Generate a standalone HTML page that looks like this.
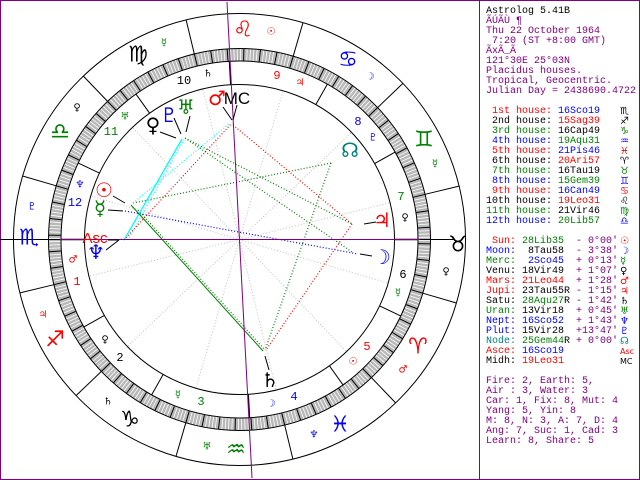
<!DOCTYPE html>
<html><head><meta charset="utf-8"><style>
html,body{margin:0;padding:0;background:#fff;width:640px;height:480px;overflow:hidden}
#w{position:relative;width:640px;height:480px}
svg{position:absolute;left:0;top:0}
#p{position:absolute;left:486px;top:7px;font-family:"Liberation Mono",monospace;font-size:10px;line-height:10px;white-space:pre;color:#800080}
.r{color:#f00}.k{color:#000}.g{color:#008000}.b{color:#00f}.t{color:#008080}.m{color:#800080}
.gl{position:absolute;left:139px;font-family:"DejaVu Sans",sans-serif;font-size:10px}
</style></head><body><div id="w">
<svg id="s" width="640" height="480" viewBox="0 0 640 480" font-family="DejaVu Sans, sans-serif">
<rect x="0.5" y="0.5" width="639" height="479" fill="#fff" stroke="#800080"/>
<line x1="479.5" y1="0" x2="479.5" y2="480" stroke="#800080"/>
<g id="geo"></g>
<circle cx="239.5" cy="239.5" r="226" fill="none" stroke="#000"/>
<circle cx="239.5" cy="239.5" r="191" fill="none" stroke="#000"/>
<circle cx="239.5" cy="239.5" r="178.5" fill="none" stroke="#000"/>
<circle cx="239.5" cy="239.5" r="155" fill="none" stroke="#000"/>
<!-- aspects -->
<g fill="none" stroke-width="1.2" stroke-dasharray="1 2">
<line x1="124" y1="240" x2="232" y2="123" stroke="#f00"/>
<line x1="233" y1="125" x2="352" y2="224" stroke="#f00"/>
<line x1="352" y1="224" x2="266" y2="350" stroke="#f00"/>
<line x1="185" y1="138" x2="352" y2="252" stroke="#008000"/>
<line x1="185" y1="138" x2="352" y2="224" stroke="#008000"/>
<line x1="133" y1="203" x2="331" y2="163" stroke="#008000"/>
<line x1="331" y1="163" x2="265" y2="350" stroke="#008000"/>
<line x1="138" y1="210" x2="265" y2="350" stroke="#008000"/>
<line x1="125" y1="211" x2="358" y2="254" stroke="#00f"/>
<line x1="133" y1="203" x2="230" y2="123" stroke="#0ff"/>
<line x1="128" y1="240" x2="185" y2="138" stroke="#0ff"/>
</g>
<line x1="124" y1="240" x2="182" y2="139" stroke="#0ff" stroke-width="1.3"/>
<line x1="131" y1="205" x2="263" y2="351" stroke="#008000"/>
<line x1="0" y1="239.5" x2="455" y2="239.5" stroke="#000"/>
<line x1="60" y1="239.5" x2="420" y2="239.5" stroke="#800080"/>
<line x1="227" y1="2" x2="252" y2="478" stroke="#800080"/>
<!-- sign glyphs -->
<g font-size="22" text-anchor="middle" dominant-baseline="central">
<text x="243" y="30" fill="#f00">♌</text><text x="348" y="60" fill="#00f">♋</text>
<text x="424" y="140" fill="#008000">♊</text><text x="458" y="245" fill="#000">♉</text>
<text x="418" y="347" fill="#f00">♈</text><text x="340" y="425" fill="#00f">♓</text>
<text x="236" y="450" fill="#008000">♒</text><text x="130" y="420" fill="#000">♑</text>
<text x="55" y="340" fill="#f00">♐</text><text x="29" y="238" fill="#00f">♏</text>
<text x="60" y="132" fill="#008000">♎</text><text x="138" y="55" fill="#000">♍</text>
</g>
<g font-size="10" text-anchor="middle" dominant-baseline="central">
<text x="164" y="43" fill="#008000">☿</text><text x="271" y="32" fill="#f00">☉</text>
<text x="370" y="77" fill="#00f">☽</text><text x="435" y="164" fill="#008000">☿</text>
<text x="446" y="272" fill="#000">♀</text><text x="403" y="370" fill="#f00">♂</text>
<text x="314" y="435" fill="#00f">♆</text><text x="207" y="447" fill="#008000">♅</text>
<text x="108" y="402" fill="#000">♄</text><text x="43" y="315" fill="#f00">♃</text>
<text x="32" y="207" fill="#00f">♇</text><text x="77" y="108" fill="#000">♀</text>
<text x="208" y="74" fill="#000">♄</text><text x="300" y="83" fill="#f00">♃</text>
<text x="373" y="138" fill="#00f">♇</text><text x="405" y="218" fill="#000">♀</text>
<text x="398" y="293" fill="#008000">☿</text><text x="353" y="362" fill="#f00">☉</text>
<text x="271" y="404" fill="#00f">☽</text><text x="178" y="395" fill="#008000">☿</text>
<text x="105" y="340" fill="#000">♀</text><text x="73" y="260" fill="#f00">♂</text>
<text x="80" y="185" fill="#00f">♆</text><text x="125" y="117" fill="#008000">♅</text>
</g>
<g font-family="Liberation Mono, monospace" font-size="12" text-anchor="middle" dominant-baseline="central">
<text x="184" y="81" fill="#000">10</text><text x="277" y="76" fill="#f00">9</text>
<text x="358" y="122" fill="#00f">8</text><text x="401" y="197" fill="#008000">7</text>
<text x="403" y="275" fill="#000">6</text><text x="367" y="347" fill="#f00">5</text>
<text x="294" y="397" fill="#00f">4</text><text x="201" y="402" fill="#008000">3</text>
<text x="120" y="358" fill="#000">2</text><text x="77" y="282" fill="#f00">1</text>
<text x="75" y="203" fill="#00f">12</text><text x="111" y="132" fill="#008000">11</text>
</g>
<g font-size="20" text-anchor="middle" dominant-baseline="central">
<text x="217" y="98" fill="#f00">♂</text><text x="169" y="115" fill="#00f">♇</text>
<text x="186" y="107" fill="#008000">♅</text><text x="153" y="125" fill="#000">♀</text>
<text x="350" y="150" fill="#008080">☊</text><text x="104" y="190" fill="#f00">☉</text>
<text x="100" y="208" fill="#008000">☿</text><text x="96" y="252" fill="#00f">♆</text>
<text x="382" y="220" fill="#f00">♃</text><text x="382" y="257" fill="#00f">☽</text>
<text x="270" y="380" fill="#000">♄</text>
</g>
<text x="237" y="104" font-family="Liberation Sans Narrow, Liberation Sans, sans-serif" font-size="17" text-anchor="middle" fill="#000" transform="scale(1,1)">MC</text>
<text x="95" y="243" font-family="Liberation Sans Narrow, Liberation Sans, sans-serif" font-size="15" text-anchor="middle" fill="#f00">Asc</text>
<g stroke="#000" fill="none">
<path d="M223 107 L232 120 M237 105 L233 120 M160 132 L176 138 M174 118 L181 134 M190 116 L186 132 M113 196 L125 203 M108 210 L123 211 M108 240 L119 240 M106 250 L119 240 M364 224 L376 222 M360 254 L372 256 M265 356 L269 370"/>
</g>
</svg>
<div id="p"><span class="k">Astrolog 5.41B</span>
ÃÚÃÙ ¶
Thu 22 October 1964
 7:20 (ST +8:00 GMT)
ÃxÃ_Ã
121°30E 25°03N
Placidus houses.
Tropical, Geocentric.
Julian Day = 2438690.4722

<span class="r"> 1st house: </span><span class="b">16Sco19</span>
<span class="k"> 2nd house: </span><span class="r">15Sag39</span>
<span class="g"> 3rd house: </span><span class="k">16Cap49</span>
<span class="b"> 4th house: </span><span class="g">19Aqu31</span>
<span class="r"> 5th house: </span><span class="b">21Pis46</span>
<span class="k"> 6th house: </span><span class="r">20Ari57</span>
<span class="g"> 7th house: </span><span class="k">16Tau19</span>
<span class="b"> 8th house: </span><span class="g">15Gem39</span>
<span class="r"> 9th house: </span><span class="b">16Can49</span>
<span class="k">10th house: </span><span class="r">19Leo31</span>
<span class="g">11th house: </span><span class="k">21Vir46</span>
<span class="b">12th house: </span><span class="g">20Lib57</span>

<span class="r"> Sun: </span><span class="g">28Lib35</span>  - 0°00'
<span class="b">Moon: </span><span class="k"> 8Tau58</span>  - 3°38'
<span class="g">Merc: </span><span class="b"> 2Sco45</span>  + 0°13'
<span class="k">Venu: 18Vir49</span>  + 1°07'
<span class="r">Mars: 21Leo44</span>  + 1°28'
<span class="r">Jupi: </span><span class="k">23Tau55R</span> - 1°15'
<span class="k">Satu: </span><span class="g">28Aqu27</span><span class="k">R</span> - 1°42'
<span class="g">Uran: </span><span class="k">13Vir18</span>  + 0°45'
<span class="b">Nept: 16Sco52</span>  + 1°43'
<span class="b">Plut: </span><span class="k">15Vir28</span>  +13°47'
<span class="t">Node: </span><span class="g">25Gem44</span><span class="k">R</span> + 0°00'
<span class="r">Asce: </span><span class="b">16Sco19</span>
<span class="k">Midh: </span><span class="r">19Leo31</span>

Fire: 2, Earth: 5,
Air : 3, Water: 3
Car: 1, Fix: 8, Mut: 4
Yang: 5, Yin: 8
M: 8, N: 3, A: 7, D: 4
Ang: 7, Suc: 1, Cad: 3
Learn: 8, Share: 5</div>
<div style="position:absolute;left:620px;top:107px;font-family:'DejaVu Sans',sans-serif;font-size:10px;line-height:10px;white-space:pre"><span class="k">♏</span>
<span class="k">♐</span>
<span class="g">♑</span>
<span class="b">♒</span>
<span class="r">♓</span>
<span class="k">♈</span>
<span class="g">♉</span>
<span class="b">♊</span>
<span class="r">♋</span>
<span class="k">♌</span>
<span class="g">♍</span>
<span class="b">♎</span>

<span class="r">☉</span>
<span class="b">☽</span>
<span class="g">☿</span>
<span class="k">♀</span>
<span class="r">♂</span>
<span class="r">♃</span>
<span class="k">♄</span>
<span class="g">♅</span>
<span class="b">♆</span>
<span class="b">♇</span>
<span class="t">☊</span>
<span class="r" style="font-size:8px">Asc</span>
<span class="k" style="font-size:8px">MC</span></div>
</div>
<script>
(function(){
var cx=239.5,cy=239.5,g=document.getElementById('geo'),ns='http://www.w3.org/2000/svg',h='';
function P(r,l){var a=(l-46.32)*Math.PI/180;return [cx+r*Math.cos(a),cy-r*Math.sin(a)];}
function L(r1,r2,l,c,w,d){var a=P(r1,l),b=P(r2,l);h+='<line x1="'+a[0].toFixed(1)+'" y1="'+a[1].toFixed(1)+'" x2="'+b[0].toFixed(1)+'" y2="'+b[1].toFixed(1)+'" stroke="'+c+'" stroke-width="'+(w||1)+'"'+(d?' stroke-dasharray="'+d+'"':'')+'/>';}
h+='<circle cx="'+cx+'" cy="'+cy+'" r="184.75" fill="none" stroke="#b8b8b8" stroke-width="12.5"/>';
for(var i=0;i<360;i++){L(179,191,i,i%5==0?'#000':'#fff',i%5==0?1:0.8);}
for(var i=0;i<12;i++){L(191,226,i*30,'#000');L(0,155,i*30,'#c0c0c0',1,'1 2');}
var hs=[226.32,255.65,286.82,319.52,351.77,20.95,46.32,75.65,106.82,139.52,171.77,200.95];
for(var i=0;i<12;i++){L(155,179,hs[i],'#000',(i%3==0)?1.5:1);}
g.innerHTML=h;
})();
</script>
</body></html>
